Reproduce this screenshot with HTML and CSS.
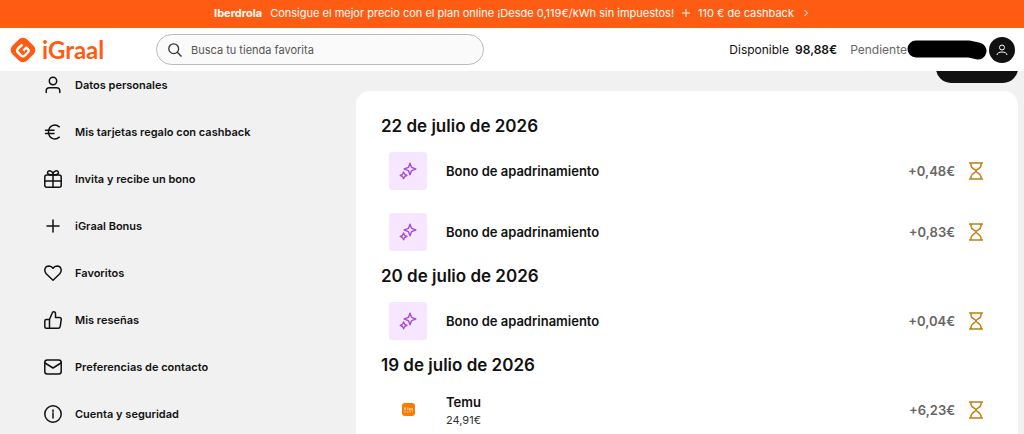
FILE: index.html
```html
<!DOCTYPE html>
<html lang="es">

<head>
  <meta charset="UTF-8" />
  <meta name="viewport" content="width=device-width, initial-scale=1.0" />
  <title>iGraal</title>
  <link rel="stylesheet" href="styles.css">
</head>

<body>
  <!-- shared icons -->
  <svg class="sprite" aria-hidden="true">
    <symbol id="sparkles" viewBox="0 0 18 18">
      <path d="M11 1.2 12.6 5.4 16.8 7 12.6 8.6 11 12.8 9.4 8.6 5.2 7 9.4 5.4Z" />
      <path d="M4.6 10 5.7 12.3 8 13.4 5.7 14.5 4.6 16.8 3.5 14.5 1.2 13.4 3.5 12.3Z" />
    </symbol>
    <symbol id="hourglass" viewBox="0 0 16 18">
      <path d="M1 1h14M1 17h14M3 1v2.5C3 6.500 8 7.500 8 9s-5 2.500-5 5.500V17M13 1v2.500C13 6.500 8 7.500 8 9s5 2.500 5 5.500V17" />
    </symbol>
  </svg>

  <a href="#" class="promo">
    <strong>Iberdrola</strong>
    <span>Consigue el mejor precio con el plan online ¡Desde 0,119€/kWh sin impuestos!</span>
    <svg class="promo_icon" viewBox="0 0 8 8"><path d="M4 0v8M0 4h8" /></svg>
    <span>110 € de cashback</span>
    <svg class="promo_icon" viewBox="0 0 8 8"><path d="M2.500 1l3 3-3 3" /></svg>
  </a>

  <header class="header">
    <a href="#" class="logo">
      <svg class="logo_mark" viewBox="0 0 28 28">
        <rect x="3.500" y="3.500" width="21" height="21" rx="6" transform="rotate(45 14 14)" fill="#ff5c13" />
        <path d="M13.500 8.500 9 12.500a3 3 0 0 0 0 4l3 2.800a3 3 0 0 0 4 0l2.800-2.800c1.200-1.200 1.200-2.500 0-3.500l-1.500-1.300-3 3" fill="none" stroke="#fff" stroke-width="2.400" />
      </svg>
      <span>iGraal</span>
    </a>
    <label class="search">
      <svg class="search_icon" viewBox="0 0 14 14"><circle cx="5.700" cy="5.700" r="4.900" /><path d="M9.300 9.300l4.200 4.200" /></svg>
      <input type="search" placeholder="Busca tu tienda favorita" aria-label="Busca tu tienda favorita">
    </label>
    <div class="balance">
      <span>Disponible</span>
      <strong>98,88€</strong>
      <span class="pending">Pendiente</span>
      <svg class="redacted" viewBox="0 0 80 20"><path d="M9 9H62L71 11" /></svg>
      <button class="avatar" aria-label="Mi cuenta">
        <svg viewBox="0 0 12 12"><circle cx="6" cy="3.500" r="2.500" /><path d="M1 11c0-4 10-4 10 0" /></svg>
      </button>
    </div>
  </header>

  <main class="page">
    <nav class="menu">
      <a href="#">
        <svg viewBox="0 0 18 18"><circle cx="9" cy="5" r="3.700" /><path d="M2.200 16.500V15c0-2 1.300-3.200 3.300-3.200h7c2 0 3.300 1.200 3.300 3.200v1.500" /></svg>
        Datos personales
      </a>
      <a href="#">
        <svg viewBox="0 0 18 18"><path d="M15.300 3.800C11 .300 4.500 2.500 4.500 9s6.500 8.700 10.800 5.200M1.500 7.200h8.500M1.500 10.500h8.500" /></svg>
        Mis tarjetas regalo con cashback
      </a>
      <a href="#">
        <svg viewBox="0 0 18 18"><rect x=".800" y="5" width="16.400" height="12.200" rx="2" /><path d="M9 5v12M.800 11h16.400M9 5C5 5 3 4 3.700 2 4.500 0 8.500.500 9 4M9 5c4 0 6-1 5.300-3C13.500 0 9.500.500 9 4" /></svg>
        Invita y recibe un bono
      </a>
      <a href="#">
        <svg viewBox="0 0 18 18"><path d="M9 3v12M3 9h12" /></svg>
        iGraal Bonus
      </a>
      <a href="#">
        <svg viewBox="0 0 18 18"><path d="M9 16.300 2.200 9.700C-.500 6.500 1 2 4.800 1.900 6.700 1.900 8.200 2.800 9 4.300 9.800 2.800 11.300 1.900 13.200 1.900 17 2 18.500 6.500 15.800 9.700Z" /></svg>
        Favoritos
      </a>
      <a href="#">
        <svg viewBox="0 0 18 18"><path d="M5.500 8.500 8 2.500C8.300 1.300 9 .800 9.800.800c1 0 1.700.800 1.700 1.900v3.800h4c1.200 0 2 1 1.700 2.200l-1 6.600c-.200 1.200-.900 1.900-2 1.900H5.500ZM5.500 8.500H2.300C1.300 8.500.800 9 .800 10v5.700c0 1 .500 1.500 1.500 1.500h3.200" /></svg>
        Mis reseñas
      </a>
      <a href="#">
        <svg viewBox="0 0 18 18"><rect x=".800" y="2" width="16.400" height="14" rx="2.500" /><path d="M1 5l8 5 8-5" /></svg>
        Preferencias de contacto
      </a>
      <a href="#">
        <svg viewBox="0 0 18 18"><circle cx="9" cy="9" r="8.200" /><path d="M9 8v5M9 5v1.600" /></svg>
        Cuenta y seguridad
      </a>
    </nav>

    <div class="content">
      <button class="action" aria-label="Filtrar"></button>

      <section class="card">
        <h2>22 de julio de 2026</h2>
        <div class="row">
          <div class="tile"><svg><use href="#sparkles" /></svg></div>
          <div class="info">
            <h3>Bono de apadrinamiento</h3>
          </div>
          <span class="amount">+0,48€</span>
          <svg class="status"><use href="#hourglass" /></svg>
        </div>
        <div class="row">
          <div class="tile"><svg><use href="#sparkles" /></svg></div>
          <div class="info">
            <h3>Bono de apadrinamiento</h3>
          </div>
          <span class="amount">+0,83€</span>
          <svg class="status"><use href="#hourglass" /></svg>
        </div>

        <h2>20 de julio de 2026</h2>
        <div class="row">
          <div class="tile"><svg><use href="#sparkles" /></svg></div>
          <div class="info">
            <h3>Bono de apadrinamiento</h3>
          </div>
          <span class="amount">+0,04€</span>
          <svg class="status"><use href="#hourglass" /></svg>
        </div>

        <h2>19 de julio de 2026</h2>
        <div class="row">
          <div class="tile shop">
            <svg class="temu" viewBox="0 0 13 13">
              <rect width="13" height="13" rx="3" />
              <path d="M2 5h2M3 5v2.500M5 5h1.500M5 6.200h1.500M7.500 7.500V5M9 7.500V5M10.500 5v2.500M2 9h2M5 9h1.500M7.500 9H9M10 9h1" />
            </svg>
          </div>
          <div class="info">
            <h3>Temu</h3>
            <p>24,91€</p>
          </div>
          <span class="amount">+6,23€</span>
          <svg class="status"><use href="#hourglass" /></svg>
        </div>
      </section>
    </div>
  </main>
</body>

</html>
```
FILE: styles.css
```css
* {
  box-sizing: border-box;
}

body {
  margin: 0;
  height: 100vh;
  display: flex;
  flex-direction: column;
  overflow: hidden;
  background-color: #f1f1f1;
  color: #111;
  font-family: Inter, sans-serif;
}

a {
  color: inherit;
  text-decoration: none;
}

h2,
h3,
p {
  margin: 0;
}

svg {
  flex-shrink: 0;
  fill: none;
  stroke: currentColor;
  stroke-linejoin: round;
}

.sprite {
  position: absolute;
  width: 0;
  height: 0;
}

.promo {
  display: flex;
  justify-content: center;
  align-items: center;
  gap: 8px;
  flex-shrink: 0;
  height: 28px;
  padding-bottom: 3px;
  background-color: #ff5c13;
  color: white;
  font-size: 11px;
}

.promo_icon {
  width: 8px;
  height: 8px;
}

.header {
  display: flex;
  align-items: center;
  flex-shrink: 0;
  height: 43px;
  padding: 0 9px;
  background-color: white;
}

.logo {
  display: flex;
  align-items: center;
  gap: 5px;
  width: 147px;
  color: #ff5c13;
  font-family: Lato, sans-serif;
  font-size: 24px;
  font-weight: 700;
  line-height: 28px;
}

.logo_mark {
  width: 28px;
  height: 28px;
  stroke: none;
}

.search {
  display: flex;
  align-items: center;
  gap: 9px;
  width: 328px;
  height: 31px;
  padding: 0 11px;
  border: 1px solid #bbb;
  border-radius: 16px;
  background-color: #fafafa;
}

.search_icon {
  width: 14px;
  height: 14px;
  color: #333;
  stroke-width: 1.3;
}

.search input {
  flex: 1;
  min-width: 0;
  padding: 0;
  border: none;
  outline: none;
  background: none;
  font-family: Inter, sans-serif;
  font-size: 11px;
}

.search input::placeholder {
  color: #555;
}

.balance {
  display: flex;
  align-items: center;
  margin-left: auto;
  font-size: 12px;
}

.balance strong {
  margin: 0 13px 0 6px;
  font-weight: 600;
}

.pending {
  color: #666;
}

.redacted {
  width: 80px;
  height: 20px;
  margin-right: 2px;
  color: black;
  stroke-width: 17;
  stroke-linecap: round;
}

.avatar {
  display: flex;
  justify-content: center;
  align-items: center;
  width: 26px;
  height: 26px;
  padding: 0;
  border: none;
  border-radius: 50%;
  background-color: #111;
  color: white;
}

.avatar svg {
  width: 12px;
  height: 12px;
}

.page {
  display: flex;
  flex: 1;
  min-height: 0;
  overflow: hidden;
}

.menu {
  width: 356px;
  flex-shrink: 0;
  margin-top: -10px;
  padding-left: 44px;
}

.menu a {
  display: flex;
  align-items: center;
  gap: 13px;
  height: 47px;
  font-size: 11px;
  font-weight: 600;
}

.menu svg {
  width: 18px;
  height: 18px;
  stroke-width: 1.5;
  stroke-linecap: round;
}

.content {
  display: flex;
  flex-direction: column;
  flex: 1;
  margin-top: -18px;
  padding-right: 6px;
}

/* scrolled partly under the header */
.action {
  align-self: flex-end;
  flex-shrink: 0;
  width: 82px;
  height: 30px;
  margin-bottom: 8px;
  border: none;
  border-radius: 15px;
  background-color: #111;
}

.card {
  padding: 21px 34px 20px 25px;
  border-radius: 14px;
  background-color: white;
}

.card h2 {
  font-size: 17px;
  font-weight: 600;
  line-height: 28px;
}

.row {
  display: flex;
  align-items: center;
  height: 61px;
  padding-left: 8px;
}

.tile {
  display: flex;
  justify-content: center;
  align-items: center;
  width: 38px;
  height: 38px;
  margin-right: 19px;
  border-radius: 3px;
  background-color: #f6e6ff;
  color: #a94fd0;
}

.tile svg {
  width: 18px;
  height: 18px;
  stroke-width: 1.4;
}

.tile.shop {
  background: none;
}

.tile .temu {
  width: 13px;
  height: 13px;
  stroke: white;
  stroke-width: 0.7;
}

.temu rect {
  fill: #ff7a00;
  stroke: none;
}

.info {
  flex: 1;
}

.info h3 {
  font-size: 13px;
  font-weight: 600;
  line-height: 20px;
}

.info p {
  color: #333;
  font-size: 11px;
  line-height: 16px;
}

.amount {
  color: #666;
  font-size: 13px;
  font-weight: 600;
}

.status {
  width: 16px;
  height: 18px;
  margin-left: 13px;
  color: #c17d14;
  stroke-width: 1.5;
}
```
